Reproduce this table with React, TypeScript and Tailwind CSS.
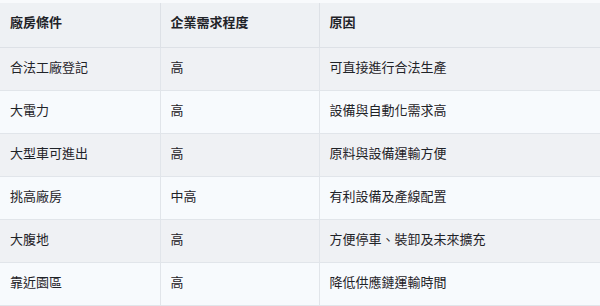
import React from "react";

const rows = [
  ["合法工廠登記", "高", "可直接進行合法生產"],
  ["大電力", "高", "設備與自動化需求高"],
  ["大型車可進出", "高", "原料與設備運輸方便"],
  ["挑高廠房", "中高", "有利設備及產線配置"],
  ["大腹地", "高", "方便停車、裝卸及未來擴充"],
  ["靠近園區", "高", "降低供應鏈運輸時間"],
];

export default function App() {
  return (
    <div
      className="h-[306px] w-[600px] overflow-hidden bg-[#f8fafc] pt-[3px] text-[13px] text-[#1f2328]"
      style={{ fontFamily: '"Noto Sans CJK TC", "Noto Sans", sans-serif' }}
    >
      <table className="w-[640px] table-fixed border-collapse">
        <colgroup>
          <col className="w-[160px]" />
          <col className="w-[159px]" />
          <col />
        </colgroup>
        <thead>
          <tr className="bg-[#eef1f4]">
            {["廠房條件", "企業需求程度", "原因"].map((h, i) => (
              <th
                key={h}
                className={`border-b border-[#dde1e6] px-[10px] pt-[9px] pb-[15px] text-left font-bold leading-[20px] ${i > 0 ? "border-l" : ""}`}
              >
                {h}
              </th>
            ))}
          </tr>
        </thead>
        <tbody>
          {rows.map((r, ri) => (
            <tr key={r[0]} className={ri % 2 === 0 ? "bg-[#eff1f4]" : "bg-[#f7fafd]"}>
              {r.map((c, ci) => (
                <td
                  key={ci}
                  className={`border-b border-[#e1e5ea] px-[10px] pt-[9px] pb-[13px] leading-[20px] ${ci > 0 ? "border-l" : ""}`}
                >
                  {c}
                </td>
              ))}
            </tr>
          ))}
        </tbody>
      </table>
    </div>
  );
}
